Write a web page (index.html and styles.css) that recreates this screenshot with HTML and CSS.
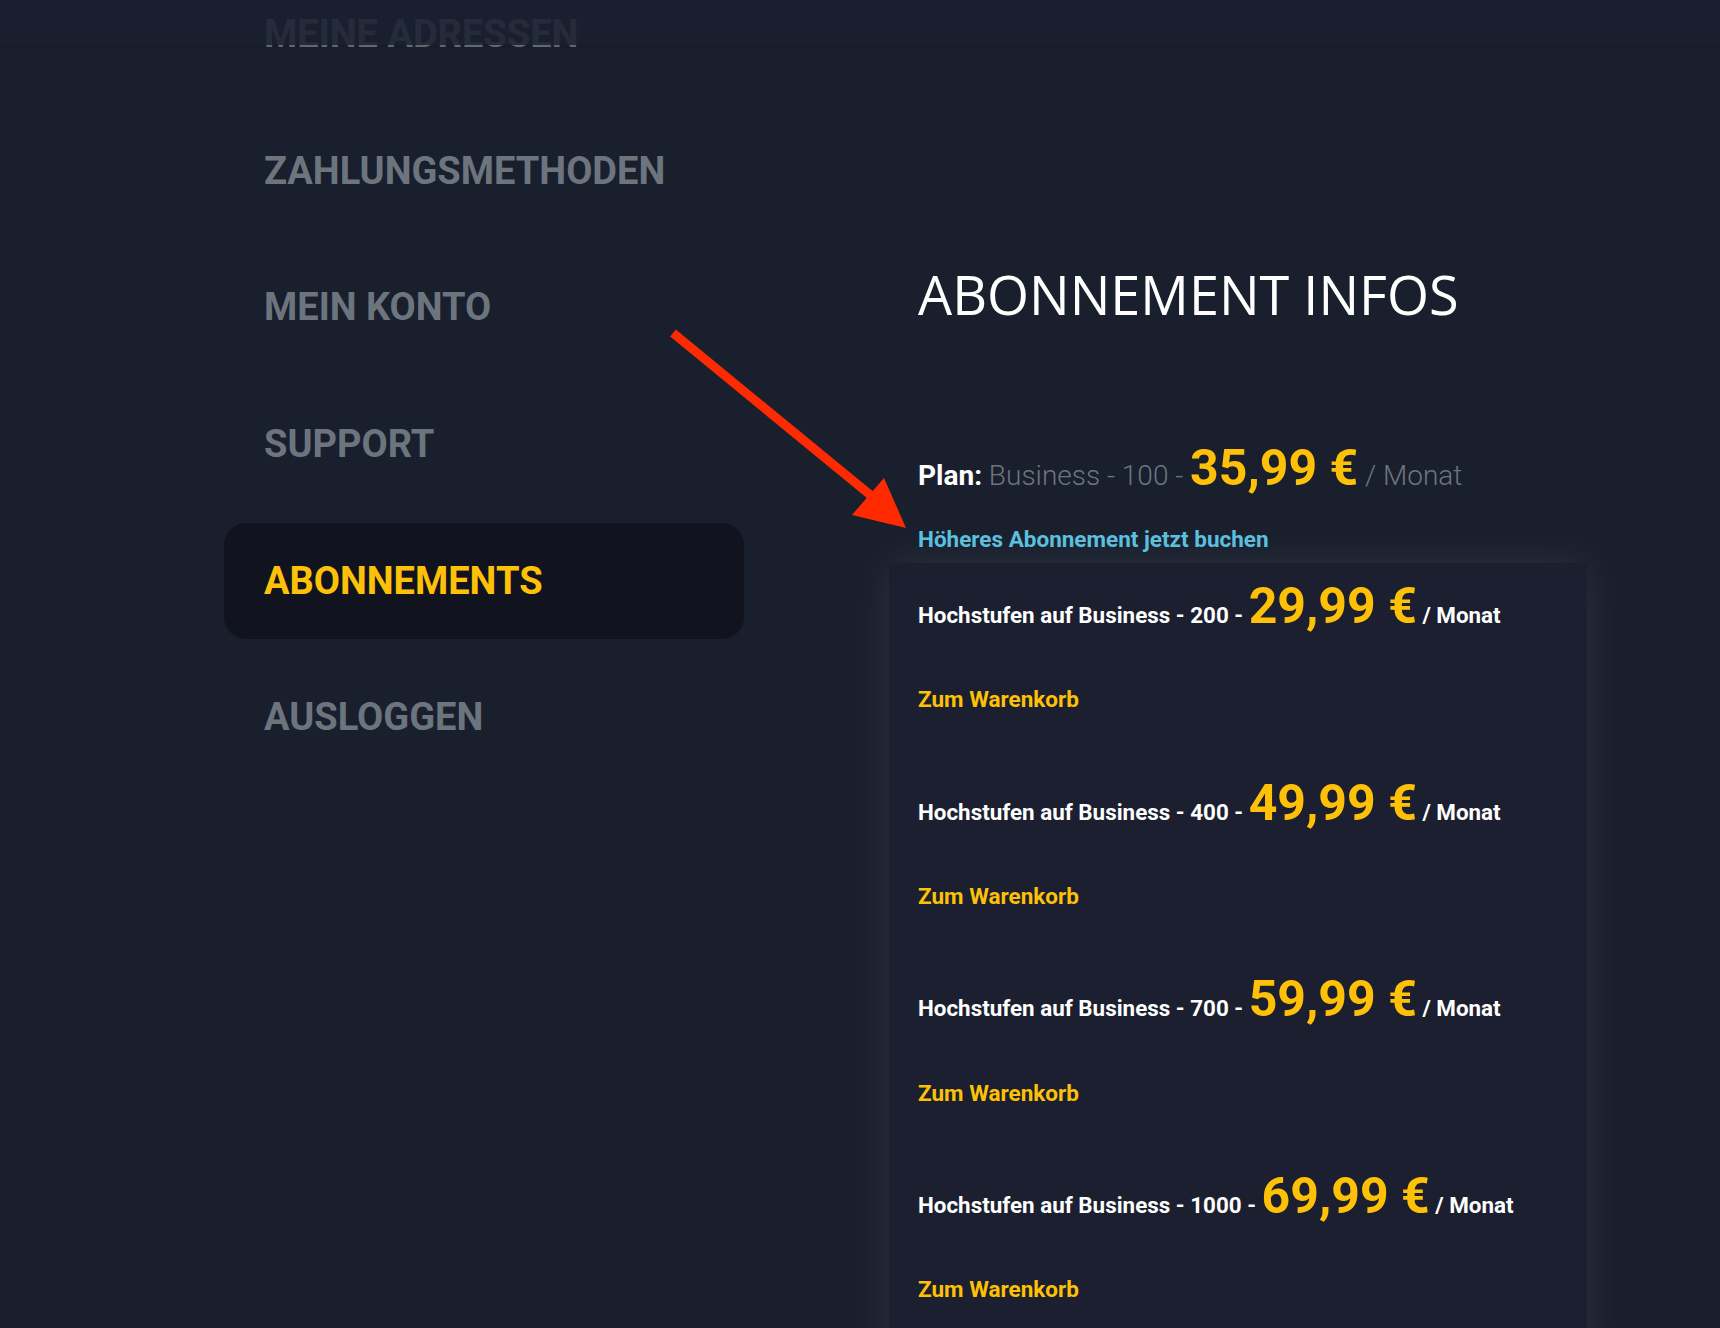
FILE: index.html
```html
<!DOCTYPE html>
<html lang="de">
<head>
    <meta charset="UTF-8">
    <meta name="viewport" content="width=device-width, initial-scale=1.0">
    <title>Mein Konto - Abonnements</title>
    <link rel="stylesheet" href="styles.css">
</head>
<body>
    <header class="topbar"></header>

    <div class="layout">
        <nav class="account-nav">
            <a class="nav-item" href="#">Meine Adressen</a>
            <a class="nav-item" href="#">Zahlungsmethoden</a>
            <a class="nav-item" href="#">Mein Konto</a>
            <a class="nav-item" href="#">Support</a>
            <a class="nav-item active" href="#">Abonnements</a>
            <a class="nav-item" href="#">Ausloggen</a>
        </nav>

        <main class="subscription">
            <div class="subscription-head">
                <h1>ABONNEMENT INFOS</h1>
                <p class="plan">
                    <b>Plan:</b> Business - 100 - <span class="price">35,99 €</span> / Monat
                </p>
                <a class="upgrade-link" href="#">Höheres Abonnement jetzt buchen</a>
            </div>

            <div class="upgrade-card">
                <div class="upgrade">
                    <p class="upgrade-line">Hochstufen auf Business - 200 - <span class="price">29,99 €</span> / Monat</p>
                    <a class="cart-link" href="#">Zum Warenkorb</a>
                </div>
                <div class="upgrade">
                    <p class="upgrade-line">Hochstufen auf Business - 400 - <span class="price">49,99 €</span> / Monat</p>
                    <a class="cart-link" href="#">Zum Warenkorb</a>
                </div>
                <div class="upgrade">
                    <p class="upgrade-line">Hochstufen auf Business - 700 - <span class="price">59,99 €</span> / Monat</p>
                    <a class="cart-link" href="#">Zum Warenkorb</a>
                </div>
                <div class="upgrade">
                    <p class="upgrade-line">Hochstufen auf Business - 1000 - <span class="price">69,99 €</span> / Monat</p>
                    <a class="cart-link" href="#">Zum Warenkorb</a>
                </div>
            </div>
        </main>
    </div>

    <!-- annotation arrow pointing at the upgrade link -->
    <svg class="hint-arrow" width="260" height="220" viewBox="0 0 260 220">
        <line x1="13" y1="13" x2="214" y2="178" stroke="#ff2a00" stroke-width="9"/>
        <polygon points="246,208 192,195 224,158" fill="#ff2a00"/>
    </svg>
</body>
</html>
```

FILE: styles.css
```css
body {
    margin: 0;
    font-family: Roboto, "Liberation Sans", Arial, sans-serif;
    color: #fff;
    background: #1a1f2e;
    overflow-x: hidden;
}

a {
    text-decoration: none;
}

.topbar {
    position: fixed;
    top: 0;
    left: 0;
    right: 0;
    height: 45px;
    background: rgba(27, 32, 48, 0.86);
    box-shadow: 0 2px 4px rgba(0, 0, 0, 0.15);
    z-index: 10;
}

.layout {
    display: grid;
    grid-template-columns: 520px 698px;
    column-gap: 145px;
    padding-left: 224px;
}

/* sidebar */
.account-nav {
    display: flex;
    flex-direction: column;
    gap: 20.7px;
    margin-top: -24px;
}

.nav-item {
    display: flex;
    align-items: center;
    height: 116px;
    padding: 0 40px;
    border-radius: 22px;
    font-size: 38px;
    font-weight: 700;
    text-transform: uppercase;
    color: #6c757d;
}

.nav-item.active {
    background: #11141f;
    color: #ffc107;
}

/* content */
.subscription-head {
    padding: 262px 29px 0;
}

.subscription-head h1 {
    margin: 0;
    font-family: "Open Sans", Roboto, sans-serif;
    font-size: 54px;
    font-weight: 400;
    line-height: 1.2;
}

.plan {
    margin: 116px 0 0;
    font-size: 28px;
    font-weight: 300;
    line-height: 1.2;
    color: #6c757d;
}

.plan b {
    font-weight: 700;
    color: #fff;
}

.price {
    font-size: 50px;
    font-weight: 700;
    line-height: 1;
    color: #ffc107;
}

.upgrade-link {
    display: block;
    margin-top: 33px;
    font-size: 22.5px;
    font-weight: 700;
    line-height: 1.2;
    color: #5bc0de;
}

.upgrade-card {
    margin-top: 10.4px;
    padding: 17.6px 29px 0;
    background: #1b1f2f;
    box-shadow: 0 0 40px rgba(255, 255, 255, 0.08);
}

.upgrade {
    padding-bottom: 64.6px;
}

.upgrade-line {
    margin: 0;
    font-size: 22.4px;
    font-weight: 700;
    line-height: 1.2;
}

.cart-link {
    display: block;
    margin-top: 55.2px;
    font-size: 22.5px;
    font-weight: 700;
    line-height: 1.2;
    color: #ffc107;
}

.hint-arrow {
    position: absolute;
    left: 660px;
    top: 320px;
    pointer-events: none;
}
```
